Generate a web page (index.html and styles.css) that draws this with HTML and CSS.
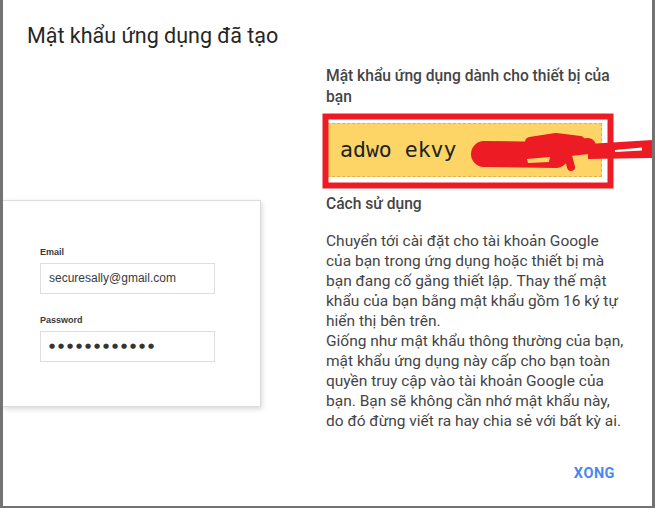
FILE: index.html
```html
<!DOCTYPE html>
<html lang="vi">
<head>
<meta charset="utf-8">
<title>Mật khẩu ứng dụng đã tạo</title>
<link rel="stylesheet" href="styles.css">
</head>
<body>
<div class="dialog">
  <h1 class="title">Mật khẩu ứng dụng đã tạo</h1>
  <div class="content">
    <div class="illustration">
      <div class="login-card">
        <div class="field-label">Email</div>
        <div class="field-box">securesally@gmail.com</div>
        <div class="field-label field-label-2">Password</div>
        <div class="field-box dots">●●●●●●●●●●●●</div>
      </div>
    </div>
    <div class="info">
      <h2 class="info-heading">Mật khẩu ứng dụng dành cho thiết bị của bạn</h2>
      <div class="app-password">adwo ekvy</div>
      <h2 class="info-heading usage">Cách sử dụng</h2>
      <p class="info-text">Chuyển tới cài đặt cho tài khoản Google của bạn trong ứng dụng hoặc thiết bị mà bạn đang cố gắng thiết lập. Thay thế mật khẩu của bạn bằng mật khẩu gồm 16 ký tự hiển thị bên trên.<br>Giống như mật khẩu thông thường của bạn, mật khẩu ứng dụng này cấp cho bạn toàn quyền truy cập vào tài khoản Google của bạn. Bạn sẽ không cần nhớ mật khẩu này, do đó đừng viết ra hay chia sẻ với bất kỳ ai.</p>
    </div>
  </div>
  <div class="actions">
    <button class="done">XONG</button>
  </div>
</div>
<svg class="annotation" width="655" height="508" viewBox="0 0 655 508" aria-hidden="true">
  <rect x="325.5" y="116.5" width="285" height="69" fill="none" stroke="#ed1c24" stroke-width="6"/>
  <g stroke="#ed1c24" stroke-linecap="round" stroke-linejoin="round" fill="none">
    <path d="M484 154 L556 155" stroke-width="26"/>
    <path d="M552 150 L588 146" stroke-width="16"/>
    <path d="M530 142 L556 138 L580 141" stroke-width="10"/>
    <path d="M567 152 L571 167" stroke-width="8"/>
  </g>
  <polygon points="527,159 550,157 549,162 528,163" fill="#fdd567"/>
  <polygon points="588,144 652,140 652,158 588,159" fill="#ed1c24"/>
  <polygon points="615,150 642,147.5 642,150.5 615,152" fill="#ffffff"/>
</svg>
</body>
</html>
```
FILE: styles.css
```css
* { box-sizing: border-box; }

html, body {
  margin: 0;
  padding: 0;
}

body {
  background: #737373;
  width: 655px;
  height: 508px;
  overflow: hidden;
  position: relative;
  font-family: Roboto, "Noto Sans", Arial, sans-serif;
}

.dialog {
  margin: 0 3px;
  height: 506px;
  background: #ffffff;
  display: flex;
  flex-direction: column;
  overflow: hidden;
}

.title {
  margin: 0;
  padding: 22px 0 0 24px;
  font-size: 21.5px;
  line-height: 28px;
  font-weight: 400;
  color: #262626;
}

.content {
  display: flex;
  margin-top: 16px;
}

.illustration {
  width: 323px;
  flex: none;
  padding-top: 134px;
}

.login-card {
  width: 258px;
  background: #fff;
  border: 1px solid #dcdcdc;
  border-left: none;
  box-shadow: 1px 2px 5px rgba(0, 0, 0, 0.16);
  padding: 46px 0 44px 37px;
  font-family: "Liberation Sans", Arial, sans-serif;
  color: #333;
}

.field-label {
  font-size: 9px;
  line-height: 11px;
  font-weight: 700;
  color: #3a3a3a;
}

.field-label-2 {
  margin-top: 21px;
}

.field-box {
  margin-top: 5px;
  width: 175px;
  height: 31px;
  border: 1px solid #dedede;
  padding-left: 8px;
  font-size: 12px;
  line-height: 29px;
  color: #3a3a3a;
}

.dots {
  padding-left: 8px;
  font-family: "DejaVu Sans", sans-serif;
  font-size: 7px;
  letter-spacing: 2.9px;
  color: #333;
}

.info {
  width: 298px;
  flex: none;
  color: #454545;
}

.info-heading {
  margin: 0;
  font-size: 15.6px;
  line-height: 21px;
  font-weight: 500;
  color: #454545;
}

.app-password {
  margin-top: 15px;
  margin-left: 1px;
  width: 275px;
  height: 54px;
  background: #fdd567;
  border: 1px dashed #e0b648;
  padding-left: 12px;
  font-family: "DejaVu Sans Mono", monospace;
  font-size: 21.5px;
  line-height: 52px;
  color: #222;
}

.usage {
  margin-top: 17px;
}

.info-text {
  margin: 16px 0 0;
  font-size: 15.5px;
  line-height: 20px;
  color: #454545;
}

.actions {
  display: flex;
  justify-content: flex-end;
  padding: 25px 29px 0 0;
}

.done {
  border: none;
  background: none;
  padding: 8px 8px;
  font-family: Roboto, Arial, sans-serif;
  font-size: 14.5px;
  line-height: 20px;
  font-weight: 700;
  color: #4a86f0;
  letter-spacing: 0.5px;
}

.annotation {
  position: absolute;
  left: 0;
  top: 0;
  pointer-events: none;
}
```
